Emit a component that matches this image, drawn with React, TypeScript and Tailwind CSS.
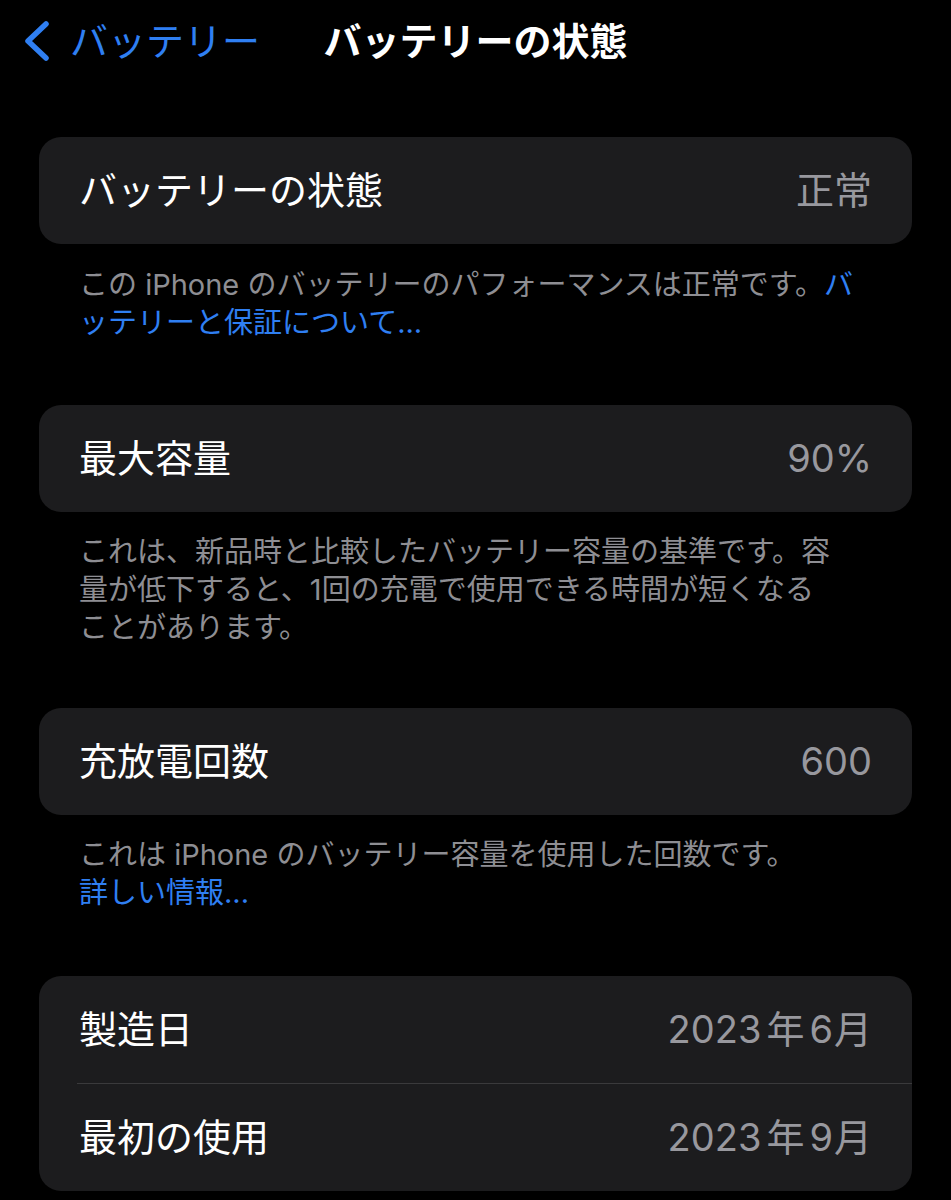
import React from 'react';

const FONT = "font-['Inter','Noto_Sans_CJK_JP',sans-serif]";

interface Row {
  label: string;
  value: React.ReactNode;
}

const Card: React.FC<{ rows: Row[] }> = ({ rows }) => (
  <div className="mx-[39px] rounded-[22px] bg-[#1c1c1e] overflow-hidden">
    {rows.map((row, i) => (
      <div key={row.label}>
        {i > 0 && <div className="ml-[38px] h-px bg-[#3a3a3c]" />}
        <div className="flex h-[107px] items-center justify-between px-[40px]">
          <span className="text-[38px] text-white">{row.label}</span>
          <span className="text-[38px] text-[#98989e]">{row.value}</span>
        </div>
      </div>
    ))}
  </div>
);

const Footer: React.FC<{ children: React.ReactNode; className?: string }> = ({ children, className }) => (
  <p className={`px-[79px] text-[29px] leading-[38px] text-[#8e8e93] ${className ?? ''}`}>{children}</p>
);

const YearMonth: React.FC<{ y: string; m: string }> = ({ y, m }) => (
  <>
    {y}
    <span className="mx-[5px]">年</span>
    {m}
    <span className="ml-[1px]">月</span>
  </>
);

export default function App() {
  return (
    <div className={`min-h-[1200px] w-full bg-black ${FONT}`}>
      {/* Nav bar */}
      <div className="grid h-[82px] grid-cols-[1fr_auto_1fr] items-center">
        <div className="flex items-center pl-[22px] text-[#2f7ff2]">
          <svg width="28" height="40" viewBox="0 0 28 40" fill="none">
            <path d="M24 3 L6 20 L24 37" stroke="currentColor" strokeWidth="5.5" strokeLinecap="round" strokeLinejoin="round" />
          </svg>
          <span className="ml-[20px] text-[38px]">バッテリー</span>
        </div>
        <h1 className="text-[38px] font-bold text-white">バッテリーの状態</h1>
        <div />
      </div>

      <div className="mt-[55px]">
        <Card rows={[{ label: 'バッテリーの状態', value: '正常' }]} />
        <Footer className="mt-[22px]">
          この iPhone のバッテリーのパフォーマンスは正常です。<span className="text-[#2f7ff2]">バ<br />ッテリーと保証について...</span>
        </Footer>
      </div>

      <div className="mt-[63px]">
        <Card rows={[{ label: '最大容量', value: '90%' }]} />
        <Footer className="mt-[21px]">
          これは、新品時と比較したバッテリー容量の基準です。容<br />
          量が低下すると、1回の充電で使用できる時間が短くなる<br />
          ことがあります。
        </Footer>
      </div>

      <div className="mt-[61px]">
        <Card rows={[{ label: '充放電回数', value: '600' }]} />
        <Footer className="mt-[21px]">
          これは iPhone のバッテリー容量を使用した回数です。<br />
          <span className="text-[#2f7ff2]">詳しい情報...</span>
        </Footer>
      </div>

      <div className="mt-[64px] pb-[8px]">
        <Card
          rows={[
            { label: '製造日', value: <YearMonth y="2023" m="6" /> },
            { label: '最初の使用', value: <YearMonth y="2023" m="9" /> },
          ]}
        />
      </div>
    </div>
  );
}
